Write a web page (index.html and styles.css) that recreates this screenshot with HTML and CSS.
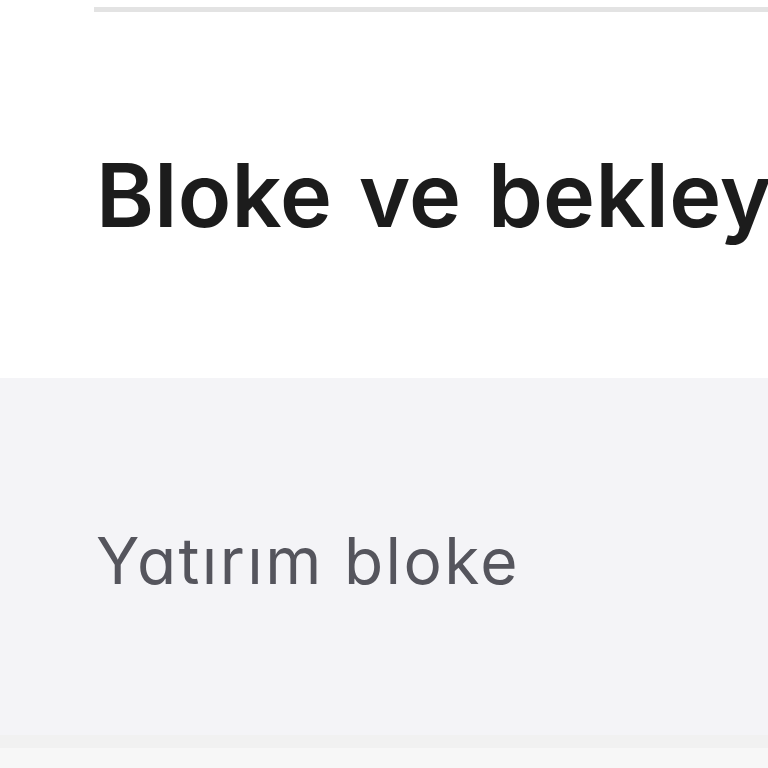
FILE: index.html
```html
<!DOCTYPE html>
<html lang="tr">
<head>
    <meta charset="UTF-8">
    <meta name="viewport" content="width=device-width, initial-scale=1.0">
    <title>Bloke ve bekleyen</title>
    <link rel="stylesheet" href="styles.css">
</head>
<body>
    <div class="top-rule"></div>

    <header class="section-head">
        <h1 class="title">Bloke ve bekleyen işlemler</h1>
    </header>

    <main class="panel">
        <p class="panel-label">Yatırım bloke</p>
    </main>

    <footer class="bottom-strip">
        <div class="strip-line"></div>
    </footer>
</body>
</html>
```

FILE: styles.css
```css
  body {
      font-family: "Inter", "Lato", sans-serif;
      font-feature-settings: "cv11";
      margin: 0;
      padding: 0;
      background-color: #fff;
      color: #1c1c1c;
      overflow: hidden;
      height: 768px;
  }
  .top-rule {
      margin: 7px 0 0 94px;
      height: 5px;
      background-color: #e3e3e3;
  }
  .section-head {
      height: 366px;
      padding-left: 96px;
      display: flex;
      align-items: center;
      white-space: nowrap;
      overflow: hidden;
  }
  .title {
      margin: 0;
      font-size: 88px;
      font-weight: 600;
      letter-spacing: 0.3px;
      word-spacing: 4px;
      line-height: 1;
  }
  .panel {
      height: 357px;
      padding-left: 96px;
      background-color: #f4f4f7;
      display: flex;
      align-items: center;
      box-sizing: border-box;
      padding-top: 8px;
  }
  .panel-label {
      margin: 0;
      font-size: 64px;
      font-weight: 400;
      color: #55555d;
      letter-spacing: 2.4px;
      line-height: 1;
  }
  .bottom-strip {
      height: 33px;
      background-color: #f7f7f7;
  }
  .strip-line {
      height: 13px;
      background-color: #f1f1f1;
  }
```
